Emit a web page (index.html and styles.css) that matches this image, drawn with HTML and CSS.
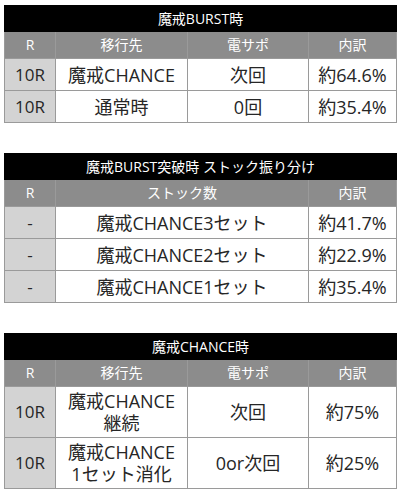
FILE: index.html
```html
<!DOCTYPE html>
<html lang="ja">
<head>
<meta charset="utf-8">
<link rel="stylesheet" href="styles.css">
</head>
<body>
<div class="page">
<table class="tbl four">
  <colgroup><col class="c1"><col class="c2"><col class="c3"><col class="c4"></colgroup>
  <tr class="title"><th colspan="4">魔戒BURST時</th></tr>
  <tr class="head"><th>R</th><th>移行先</th><th>電サポ</th><th>内訳</th></tr>
  <tr class="row"><td class="r">10R</td><td>魔戒CHANCE</td><td>次回</td><td>約64.6%</td></tr>
  <tr class="row"><td class="r">10R</td><td>通常時</td><td>0回</td><td>約35.4%</td></tr>
</table>

<table class="tbl three">
  <colgroup><col class="c1"><col class="c23"><col class="c4"></colgroup>
  <tr class="title"><th colspan="3">魔戒BURST突破時 ストック振り分け</th></tr>
  <tr class="head"><th>R</th><th>ストック数</th><th>内訳</th></tr>
  <tr class="row"><td class="r">-</td><td>魔戒CHANCE3セット</td><td>約41.7%</td></tr>
  <tr class="row"><td class="r">-</td><td>魔戒CHANCE2セット</td><td>約22.9%</td></tr>
  <tr class="row"><td class="r">-</td><td>魔戒CHANCE1セット</td><td>約35.4%</td></tr>
</table>

<table class="tbl four tall">
  <colgroup><col class="c1"><col class="c2"><col class="c3"><col class="c4"></colgroup>
  <tr class="title"><th colspan="4">魔戒CHANCE時</th></tr>
  <tr class="head"><th>R</th><th>移行先</th><th>電サポ</th><th>内訳</th></tr>
  <tr class="row2"><td class="r">10R</td><td>魔戒CHANCE<br>継続</td><td>次回</td><td>約75%</td></tr>
  <tr class="row2"><td class="r">10R</td><td>魔戒CHANCE<br>1セット消化</td><td>0or次回</td><td>約25%</td></tr>
</table>
</div>
</body>
</html>
```

FILE: styles.css
```css
html, body {
  margin: 0;
  padding: 0;
  background: #ffffff;
}
.page {
  padding: 5px 0 0 4px;
  display: flex;
  flex-direction: column;
  gap: 30px;
  font-family: "Open Sans", "Noto Sans CJK JP", sans-serif;
}
.tbl {
  border-collapse: collapse;
  table-layout: fixed;
  width: 392px;
}
.c1 { width: 51px; }
.c2 { width: 132px; }
.c3 { width: 121px; }
.c4 { width: 88px; }
.c23 { width: 253px; }
.tbl th, .tbl td {
  border: 1px solid #9a9a9a;
  padding: 0;
  text-align: center;
  vertical-align: middle;
}
.title th {
  background: #000000;
  color: #ffffff;
  font-size: 14px;
  font-weight: normal;
  height: 25px;
  line-height: 18px;
  border-color: #000;
}
.head th {
  background: #8c8c8c;
  color: #ffffff;
  font-size: 14px;
  font-weight: normal;
  height: 26px;
  line-height: 18px;
}
.row td {
  height: 31px;
  font-size: 18px;
  line-height: 22px;
  color: #262626;
  background: #ffffff;
}
.row2 td {
  height: 50px;
  font-size: 18px;
  line-height: 22px;
  color: #262626;
  background: #ffffff;
}
.tbl td.r {
  background: #d3d3d3;
  font-size: 17px;
}
```
